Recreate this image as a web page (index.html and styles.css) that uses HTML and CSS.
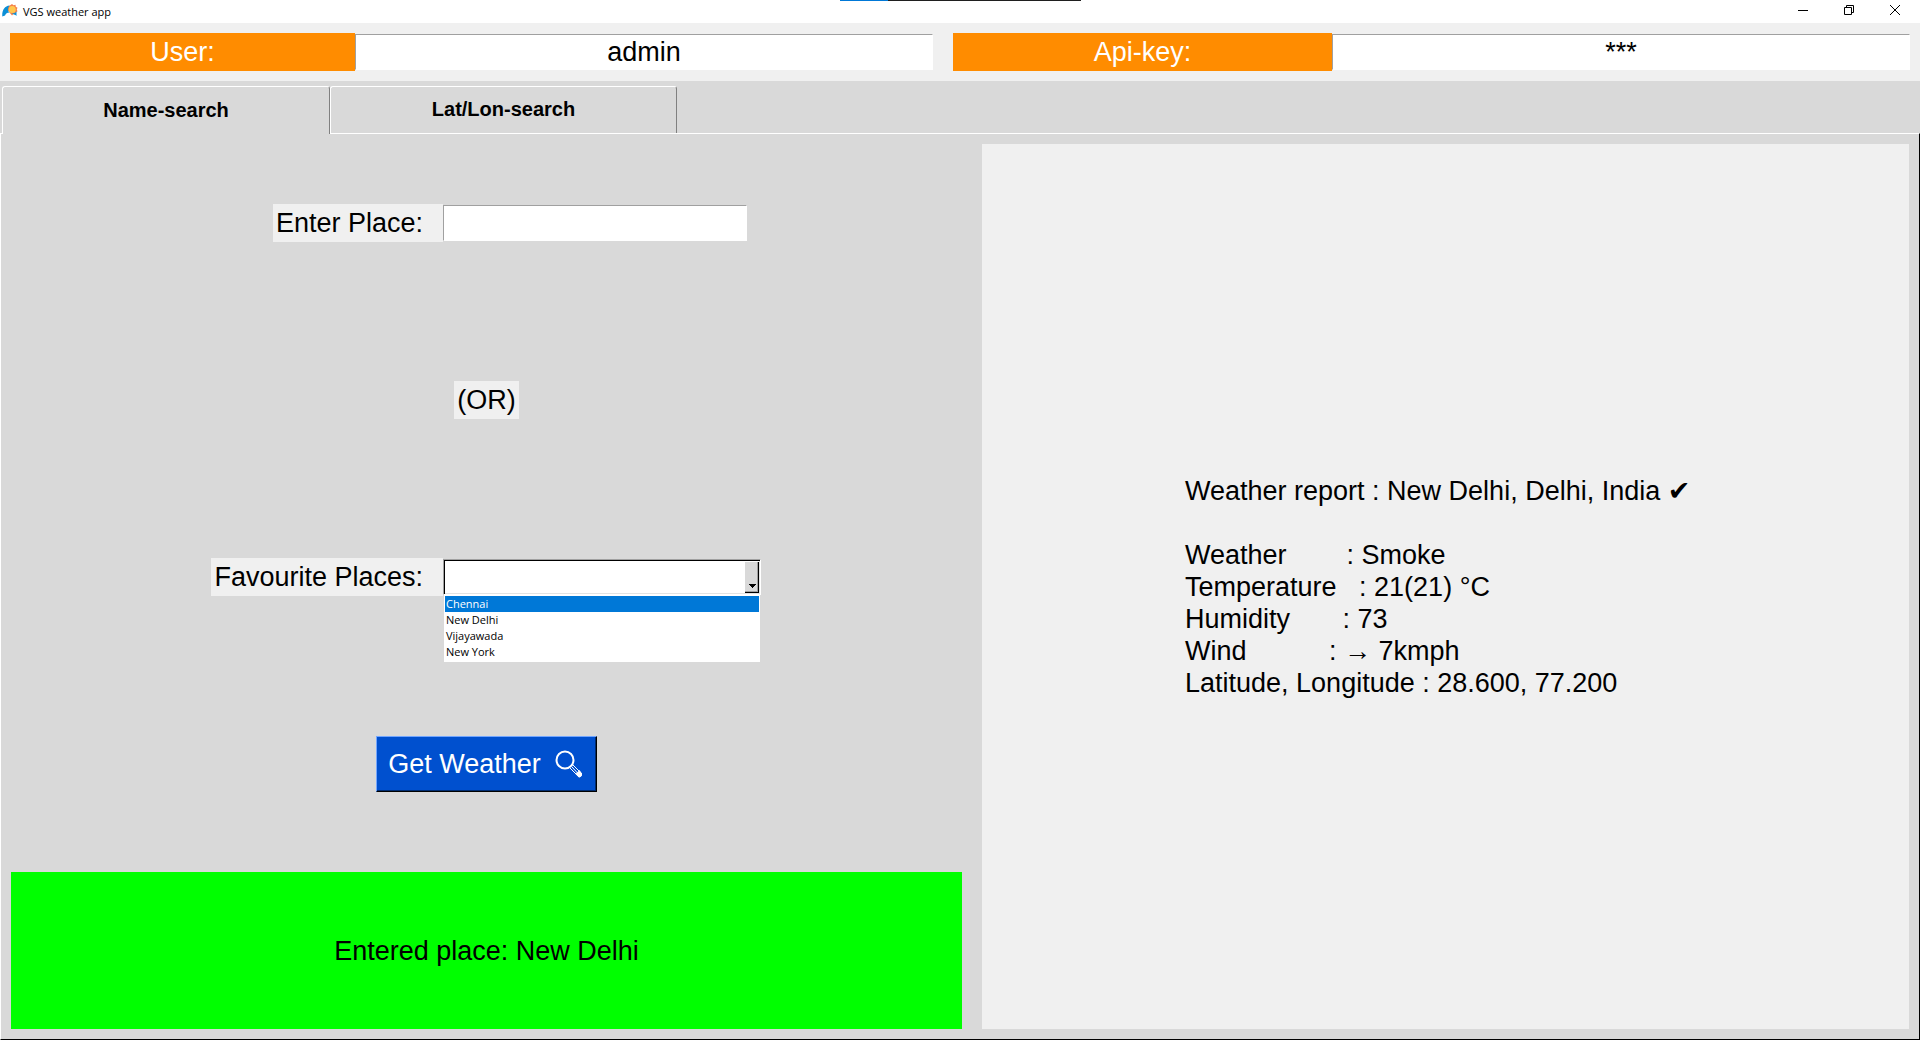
FILE: index.html
```html
<!DOCTYPE html>
<html lang="en">
<head>
<meta charset="utf-8">
<title>VGS weather app</title>
<link rel="stylesheet" href="styles.css">
</head>
<body>
<div class="screen-strip"></div>
<header class="titlebar">
  <svg class="app-icon" viewBox="0 0 16 16" aria-hidden="true">
    <path d="M10 0l1.500 1.200L13.500.8l.3 1.900 1.700 1-.7 1.800.7 1.800-1.700 1.100-.3 1.900-2-.3L10 11.500 5.500 6 6 2.500 8.200 1.300z" fill="#f4804a"/>
    <circle cx="10.200" cy="5.500" r="3.500" fill="#ffc84e"/>
    <path d="M.3 12.500C-.2 6.500 2.500 2 7.500 1.500 5.500 4 5.500 7 7.500 8.500 5 8.500 3.800 9.500 3 11.500z" fill="#0b8fd6"/>
    <path d="M9.500 9.500q3.500.5 5-2V12q-.8-1.500-2.500-1.500z" fill="#0b8fd6"/>
  </svg>
  <h1 class="app-title">VGS weather app</h1>
  <div class="window-controls">
    <button class="window-button" aria-label="Minimize"><svg viewBox="0 0 10 10"><path d="M0 5.500h10"/></svg></button>
    <button class="window-button" aria-label="Restore"><svg viewBox="0 0 10 10"><path d="M.5 2.500h7v7h-7zM2.500 2.500v-2h7v7h-2"/></svg></button>
    <button class="window-button" aria-label="Close"><svg viewBox="0 0 10 10"><path d="M0 0l10 10M10 0L0 10"/></svg></button>
  </div>
</header>

<section class="account">
  <div class="account-field account-user">
    <label class="account-label" for="user">User:</label>
    <input class="entry account-entry" id="user" type="text" value="admin">
  </div>
  <div class="account-field account-key">
    <label class="account-label" for="api-key">Api-key:</label>
    <input class="entry account-entry" id="api-key" type="text" value="***">
  </div>
</section>

<nav class="tabs" role="tablist">
  <button class="tab tab-name tab-active" role="tab" aria-selected="true">Name-search</button>
  <button class="tab tab-coords" role="tab" aria-selected="false">Lat/Lon-search</button>
</nav>

<main class="panel">
  <form class="search">
    <div class="search-row">
      <label class="field-label" for="place">Enter Place:</label>
      <input class="entry place-entry" id="place" type="text">
    </div>
    <div class="center-row"><span class="chip">(OR)</span></div>
    <div class="search-row">
      <label class="field-label" for="favourite">Favourite Places:</label>
      <div class="combo">
        <select class="combo-select" id="favourite"><option value=""></option></select>
        <span class="combo-arrow"><svg viewBox="0 0 7 4"><path d="M0 0h7v1H6v1H5v1H4v1H3V3H2V2H1V1H0z"/></svg></span>
        <ul class="combo-list" role="listbox" aria-label="Favourite places">
          <li class="combo-option combo-selected" role="option" aria-selected="true">Chennai</li>
          <li class="combo-option" role="option">New Delhi</li>
          <li class="combo-option" role="option">Vijayawada</li>
          <li class="combo-option" role="option">New York</li>
        </ul>
      </div>
    </div>
    <div class="center-row">
      <button class="submit" type="button">Get Weather
        <svg class="lens" viewBox="0 0 28 28" aria-hidden="true">
          <circle cx="10" cy="10" r="8.500"/>
          <path class="lens-handle" d="M14.500 17.500l3-3 9 9q1 2.500-2.500 3.500zM17 17l6 6.500"/>
          <path class="lens-tip" d="M20.500 24l4-4 2.500 3.500q.5 3-3 4z"/>
        </svg>
      </button>
    </div>
    <output class="status">Entered place: New Delhi</output>
  </form>
  <section class="report">
<pre class="report-text">Weather report : New Delhi, Delhi, India ✔

Weather        : Smoke
Temperature   : 21(21) °C
Humidity       : 73
Wind           : → 7kmph
Latitude, Longitude : 28.600, 77.200</pre>
  </section>
</main>
</body>
</html>
```

FILE: styles.css
```css
* { box-sizing: border-box; }

body {
  margin: 0;
  min-height: 100vh;
  display: flex;
  flex-direction: column;
  background: #d9d9d9;
  color: #000;
  font: 27px/32px "Liberation Sans", Arial, sans-serif;
}

button, input, select { font: inherit; color: inherit; border-radius: 0; }

/* Edge of the window behind, along the top of the screen */
.screen-strip {
  position: absolute;
  top: 0;
  left: 840px;
  width: 241px;
  height: 1px;
  background: linear-gradient(to right, #0078d7 48px, #1f1f1f 48px);
}

.titlebar {
  display: flex;
  align-items: center;
  height: 23px;
  padding: 0 2px;
  background: #fff;
}
.app-icon { width: 16px; height: 16px; }
.app-title {
  flex: 1;
  margin: 0 0 0 5px;
  font: 11px/16px "Open Sans", "Noto Sans", sans-serif;
}
.window-controls { display: flex; }
.window-button {
  width: 46px;
  height: 20px;
  padding: 0;
  margin-bottom: 3px;
  border: 0;
  background: none;
  display: flex;
  align-items: center;
  justify-content: center;
}
.window-button svg { width: 10px; height: 10px; fill: none; stroke: #000; }

.account {
  display: grid;
  grid-template-columns: 923fr 957fr;
  gap: 20px;
  padding: 10px;
  background: #f0f0f0;
}
.account-field { display: grid; align-items: center; }
.account-user { grid-template-columns: 345fr 578fr; }
.account-key { grid-template-columns: 379fr 578fr; }
.account-label {
  padding: 3px;
  background: #ff8c00;
  color: #fff;
  text-align: center;
}
.account-entry { width: 100%; text-align: center; }
.entry {
  height: 36px;
  padding: 0 2px;
  border: 1px solid #fff;
  border-top-color: #a0a0a0;
  border-left-color: #a0a0a0;
  background: #fff;
  outline: 0;
}

.tabs { display: flex; padding: 5px 2px 0; }
.tab {
  height: 47px;
  padding: 0 0 2px;
  border: 1px solid #fff;
  border-right-color: #808080;
  border-bottom: 0;
  border-radius: 3px 3px 0 0;
  background: #d9d9d9;
  font-size: 20px;
  font-weight: bold;
}
.tab-name { width: 328px; }
.tab-coords { width: 347px; }
.tab-active { position: relative; height: 48px; margin-bottom: -1px; }

.panel {
  flex: 1;
  display: grid;
  grid-template-columns: 971fr 947fr;
  border: 1px solid;
  border-color: #fff #000 #000 #fff;
}
.search {
  display: grid;
  grid-template-rows: 177fr 177fr 177fr 197fr 177fr;
}
.search-row {
  display: grid;
  grid-template-columns: 442fr 529fr;
  align-items: center;
}
.field-label {
  justify-self: end;
  padding: 3px 20px 3px 3px;
  background: #f0f0f0;
}
.place-entry { width: 304px; }
.center-row { display: flex; align-items: center; justify-content: center; }
.chip { padding: 3px; background: #f0f0f0; }

.combo { position: relative; width: 318px; height: 36px; }
.combo-select {
  display: block;
  width: 100%;
  height: 100%;
  appearance: none;
  padding: 0 18px 0 3px;
  border: 1px solid;
  border-color: #a0a0a0 #fff #fff #a0a0a0;
  background: #fff;
  box-shadow: inset 1px 1px #000, inset -1px -1px #e3e3e3;
}
.combo-arrow {
  position: absolute;
  top: 3px;
  right: 2px;
  width: 14px;
  height: 31px;
  display: flex;
  align-items: flex-end;
  justify-content: center;
  padding: 0 0 5px;
  background: #d9d9d9;
  box-shadow: inset -1px -1px #000, inset -2px -2px #a0a0a0;
  pointer-events: none;
}
.combo-arrow svg { width: 7px; height: 4px; }
.combo-list {
  position: absolute;
  top: 36px;
  left: 1px;
  width: 316px;
  margin: 0;
  padding: 1px 1px 2px;
  background: #fff;
  list-style: none;
  font: 11px/16px "Open Sans", "Noto Sans", sans-serif;
}
.combo-option { padding-left: 1px; }
.combo-selected { background: #0078d7; color: #fff; }

.submit {
  display: flex;
  align-items: center;
  gap: 14px;
  height: 56px;
  padding: 0 13px 0 11px;
  border: 1px solid;
  border-color: #73a6ff #000 #000 #73a6ff;
  background: #0050cf;
  box-shadow: inset -1px -1px #002c70;
  color: #fff;
}
.lens { width: 28px; height: 28px; fill: none; stroke: #fff; stroke-width: 2px; }
.lens-handle { stroke-width: 1px; }
.lens-tip { fill: #fff; stroke: none; }

.status {
  display: flex;
  align-items: center;
  justify-content: center;
  margin: 10px;
  background: #0f0;
}
.report {
  display: flex;
  align-items: center;
  justify-content: center;
  margin: 10px;
  background: #f0f0f0;
}
.report-text {
  min-width: 521px;
  margin: 0;
  font-family: "Liberation Sans", Arial, "DejaVu Sans", sans-serif;
  font-size: 27px;
}
```
